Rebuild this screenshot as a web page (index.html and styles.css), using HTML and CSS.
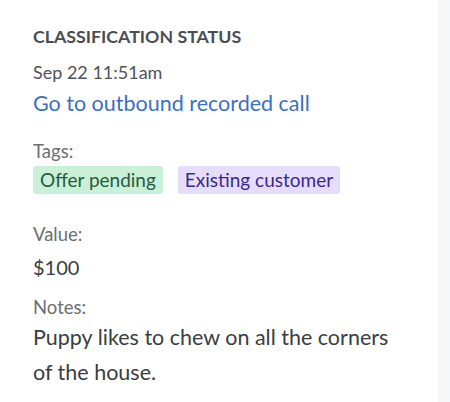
FILE: index.html
```html
<!DOCTYPE html>
<html>
<head>
<meta charset="utf-8">
<link rel="stylesheet" href="styles.css">
</head>
<body>
<div class="layout">
  <section class="panel">
    <h2 class="heading">CLASSIFICATION STATUS</h2>
    <div class="date">Sep 22 11:51am</div>
    <a class="link" href="#">Go to outbound recorded call</a>
    <div class="field tags-field">
      <div class="label">Tags:</div>
      <div class="tags">
        <span class="tag tag-green">Offer pending</span>
        <span class="tag tag-purple">Existing customer</span>
      </div>
    </div>
    <div class="field value-field">
      <div class="label">Value:</div>
      <div class="value">$100</div>
    </div>
    <div class="field notes-field">
      <div class="label">Notes:</div>
      <div class="notes">Puppy likes to chew on all the corners of the house.</div>
    </div>
  </section>
  <aside class="side"></aside>
</div>
</body>
</html>
```
FILE: styles.css
```css
html, body {
  margin: 0;
  padding: 0;
  background: #ffffff;
}
body {
  font-family: "Lato", "Noto Sans", sans-serif;
  width: 450px;
  height: 402px;
  overflow: hidden;
}
.layout {
  display: flex;
  height: 402px;
}
.panel {
  width: 438px;
  box-sizing: border-box;
  padding: 24px 40px 0 33px;
  display: flex;
  flex-direction: column;
}
.side {
  flex: 1;
  background: #f6f7f9;
}
.heading {
  margin: 0;
  font-size: 17.75px;
  font-weight: 700;
  color: #4a4e54;
  line-height: 24px;
}
.date {
  margin-top: 12px;
  font-size: 18px;
  color: #4f5357;
  line-height: 24px;
}
.link {
  margin-top: 5px;
  font-size: 21.5px;
  color: #3a6fc2;
  text-decoration: none;
  line-height: 28px;
}
.label {
  font-size: 18.5px;
  color: #6b6e73;
  line-height: 22px;
}
.tags-field {
  margin-top: 23px;
}
.value-field {
  margin-top: 29px;
}
.notes-field {
  margin-top: 15px;
}
.tags {
  display: flex;
  gap: 15px;
  margin-top: 4px;
}
.tag {
  font-size: 19px;
  line-height: 28px;
  padding: 0 7px;
  border-radius: 3px;
}
.tag-green {
  background: #c9f0d9;
  color: #2c5a3c;
}
.tag-purple {
  background: #e6ddfc;
  color: #3a2a8c;
}
.value {
  margin-top: 8px;
  font-size: 20px;
  color: #3a3d41;
  line-height: 28px;
}
.notes {
  margin-top: 2px;
  font-size: 21.5px;
  color: #3a3d41;
  line-height: 35px;
}
```
